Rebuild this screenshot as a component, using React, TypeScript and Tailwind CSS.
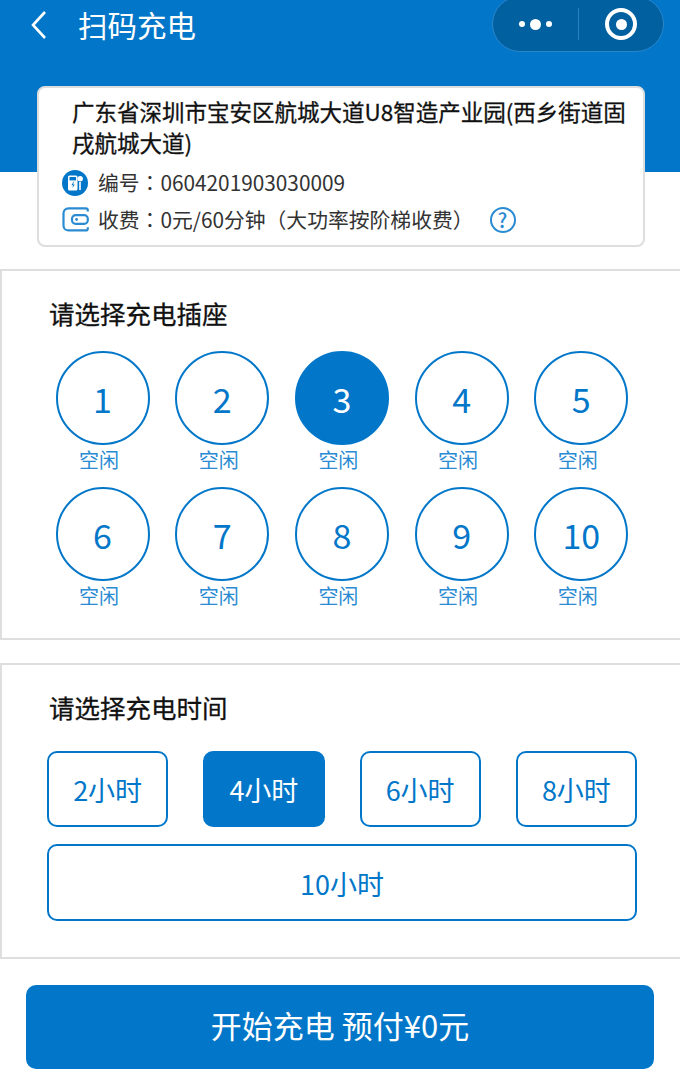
const font = { fontFamily: '"Noto Sans CJK SC", "Noto Sans", sans-serif' };
const colon = { fontFamily: '"Noto Sans CJK TC", sans-serif' };

const sockets = [1, 2, 3, 4, 5, 6, 7, 8, 9, 10];

function ChargerIcon() {
  return (
    <svg viewBox="0 0 26 26" className="h-[26px] w-[26px] shrink-0">
      <circle cx="13" cy="13" r="13" fill="#0277c9" />
      <rect x="6" y="5.5" width="9.5" height="15" rx="1.5" fill="#fff" />
      <rect x="7.5" y="7" width="6.5" height="3.4" fill="#0277c9" />
      <path d="M11.6 11.6l-2.2 3.6h1.8l-1 3 2.6-3.8h-1.8l1-2.8z" fill="#0277c9" />
      <path d="M18 20v-8" stroke="#fff" strokeWidth="1.6" fill="none" />
      <circle cx="18.2" cy="8.8" r="2.7" fill="#fff" />
    </svg>
  );
}

function WalletIcon() {
  return (
    <svg viewBox="0 0 27 25" className="-mt-[1px] h-[25px] w-[27px] shrink-0" fill="none" stroke="#2a8bd2" strokeWidth="2.2">
      <path d="M25.8 4.5V3.4a2 2 0 0 0-2-2H6.5a5 5 0 0 0-5 5v12a5 5 0 0 0 5 5h17.3a2 2 0 0 0 2-2v-1.2" />
      <rect x="10" y="8.2" width="15.8" height="8.6" rx="3.6" />
      <circle cx="14.6" cy="12.5" r="1.4" fill="#2a8bd2" stroke="none" />
    </svg>
  );
}

function Socket({ n }: { n: number }) {
  const active = n === 3;
  return (
    <div className="flex w-[94px] flex-col items-center">
      <div
        className={
          active
            ? 'flex h-[94px] w-[94px] items-center justify-center rounded-full border-2 border-[#0277c9] bg-[#0277c9] text-[34px] text-white'
            : 'flex h-[94px] w-[94px] items-center justify-center rounded-full border-2 border-[#0277c9] bg-white text-[34px] text-[#0277c9]'
        }
      >
        {n}
      </div>
      <div className="-ml-[7px] h-[28px] pt-[1px] text-[20px] leading-[28px] text-[#2a8bd2]">空闲</div>
    </div>
  );
}

function TimeButton({ label, active }: { label: string; active?: boolean }) {
  return (
    <div
      className={
        active
          ? 'flex h-[76px] flex-1 items-center justify-center rounded-[10px] border-2 border-[#0277c9] bg-[#0277c9] pt-[3px] text-[27px] text-white'
          : 'flex h-[76px] flex-1 items-center justify-center rounded-[10px] border-2 border-[#0277c9] bg-white pt-[3px] text-[27px] text-[#0277c9]'
      }
    >
      {label}
    </div>
  );
}

export default function App() {
  return (
    <div style={font} className="h-[1077px] w-[680px] overflow-hidden bg-white">
      <div className="h-[172px] bg-[#0277c9] pl-[37px] pr-[35px]">
        <div className="flex h-[86px] items-start">
          <svg viewBox="0 0 20 30" className="mt-[10px] -ml-[9px] h-[30px] w-[20px]" fill="none" stroke="#fff" strokeWidth="2.6">
            <path d="M17 2L5 15l12 13" />
          </svg>
          <div className="ml-[30px] mt-[2px] text-[29.5px] leading-[44px] text-white">扫码充电</div>
          <div className="relative ml-auto -mt-[4px] mr-[-19px] flex h-[56px] w-[172px] items-center rounded-full border border-[#2a86cc] bg-[#01609f]">
            <div className="flex w-[85px] items-center justify-center gap-[5px]">
              <span className="h-[6px] w-[6px] rounded-full bg-white" />
              <span className="h-[11px] w-[11px] rounded-full bg-white" />
              <span className="h-[6px] w-[6px] rounded-full bg-white" />
            </div>
            <div className="h-[32px] w-px bg-[#2a7fbd]" />
            <div className="flex flex-1 items-center justify-center">
              <div className="flex h-[32px] w-[32px] items-center justify-center rounded-full border-[4px] border-white">
                <span className="h-[11px] w-[11px] rounded-full bg-white" />
              </div>
            </div>
          </div>
        </div>
        <div className="relative h-[161px] w-[608px] rounded-[8px] border-2 border-[#dedede] bg-white pl-[23px] pr-[10px] pt-[8px]">
          <div className="ml-[10px] text-[22.5px] font-normal leading-[31px] text-[#111] [-webkit-text-stroke:0.3px_#111]">
            广东省深圳市宝安区航城大道U8智造产业园(西乡街道固戌航城大道)
          </div>
          <div className="mt-[6px] flex h-[37px] items-center text-[20.8px] text-[#333]">
            <ChargerIcon />
            <span className="ml-[10px]">
              编号<span style={colon}>：</span>0604201903030009
            </span>
          </div>
          <div className="flex h-[37px] items-center text-[20.8px] text-[#333]">
            <WalletIcon />
            <span className="ml-[9px]">
              收费<span style={colon}>：</span>0元/60分钟（大功率按阶梯收费）
            </span>
            <span className="ml-[16px] flex h-[26px] w-[26px] items-center justify-center rounded-full border-2 border-[#2a8bd2] text-[20px] font-medium leading-none text-[#2a8bd2]">
              ?
            </span>
          </div>
        </div>
      </div>

      <div className="mt-[97px] h-[371px] border-y-2 border-l-2 border-[#dedede] pl-[47px] pt-[23px]">
        <div className="h-[57px] text-[25.5px] font-normal leading-[38px] text-[#111] [-webkit-text-stroke:0.3px_#111]">请选择充电插座</div>
        <div className="ml-[6.5px] grid grid-cols-[repeat(5,94px)] gap-x-[25.7px] gap-y-[14px]">
          {sockets.map((n) => (
            <Socket key={n} n={n} />
          ))}
        </div>
      </div>

      <div className="mt-[23px] h-[296px] border-y-2 border-l-2 border-[#dedede] pl-[45px] pt-[23px]">
        <div className="ml-[2px] h-[63px] text-[25.5px] font-normal leading-[38px] text-[#111] [-webkit-text-stroke:0.3px_#111]">请选择充电时间</div>
        <div className="flex w-[590px] gap-[35px]">
          <TimeButton label="2小时" />
          <TimeButton label="4小时" active />
          <TimeButton label="6小时" />
          <TimeButton label="8小时" />
        </div>
        <div className="mt-[17px] flex h-[77px] w-[590px] items-center justify-center rounded-[10px] border-2 border-[#0277c9] pt-[3px] text-[27px] text-[#0277c9]">
          10小时
        </div>
      </div>

      <div className="mt-[26px] px-[26px]">
        <div className="flex h-[84px] items-center justify-center rounded-[10px] bg-[#0277c9] pb-[3px] text-[31px] text-white">
          开始充电 预付¥0元
        </div>
      </div>
    </div>
  );
}
